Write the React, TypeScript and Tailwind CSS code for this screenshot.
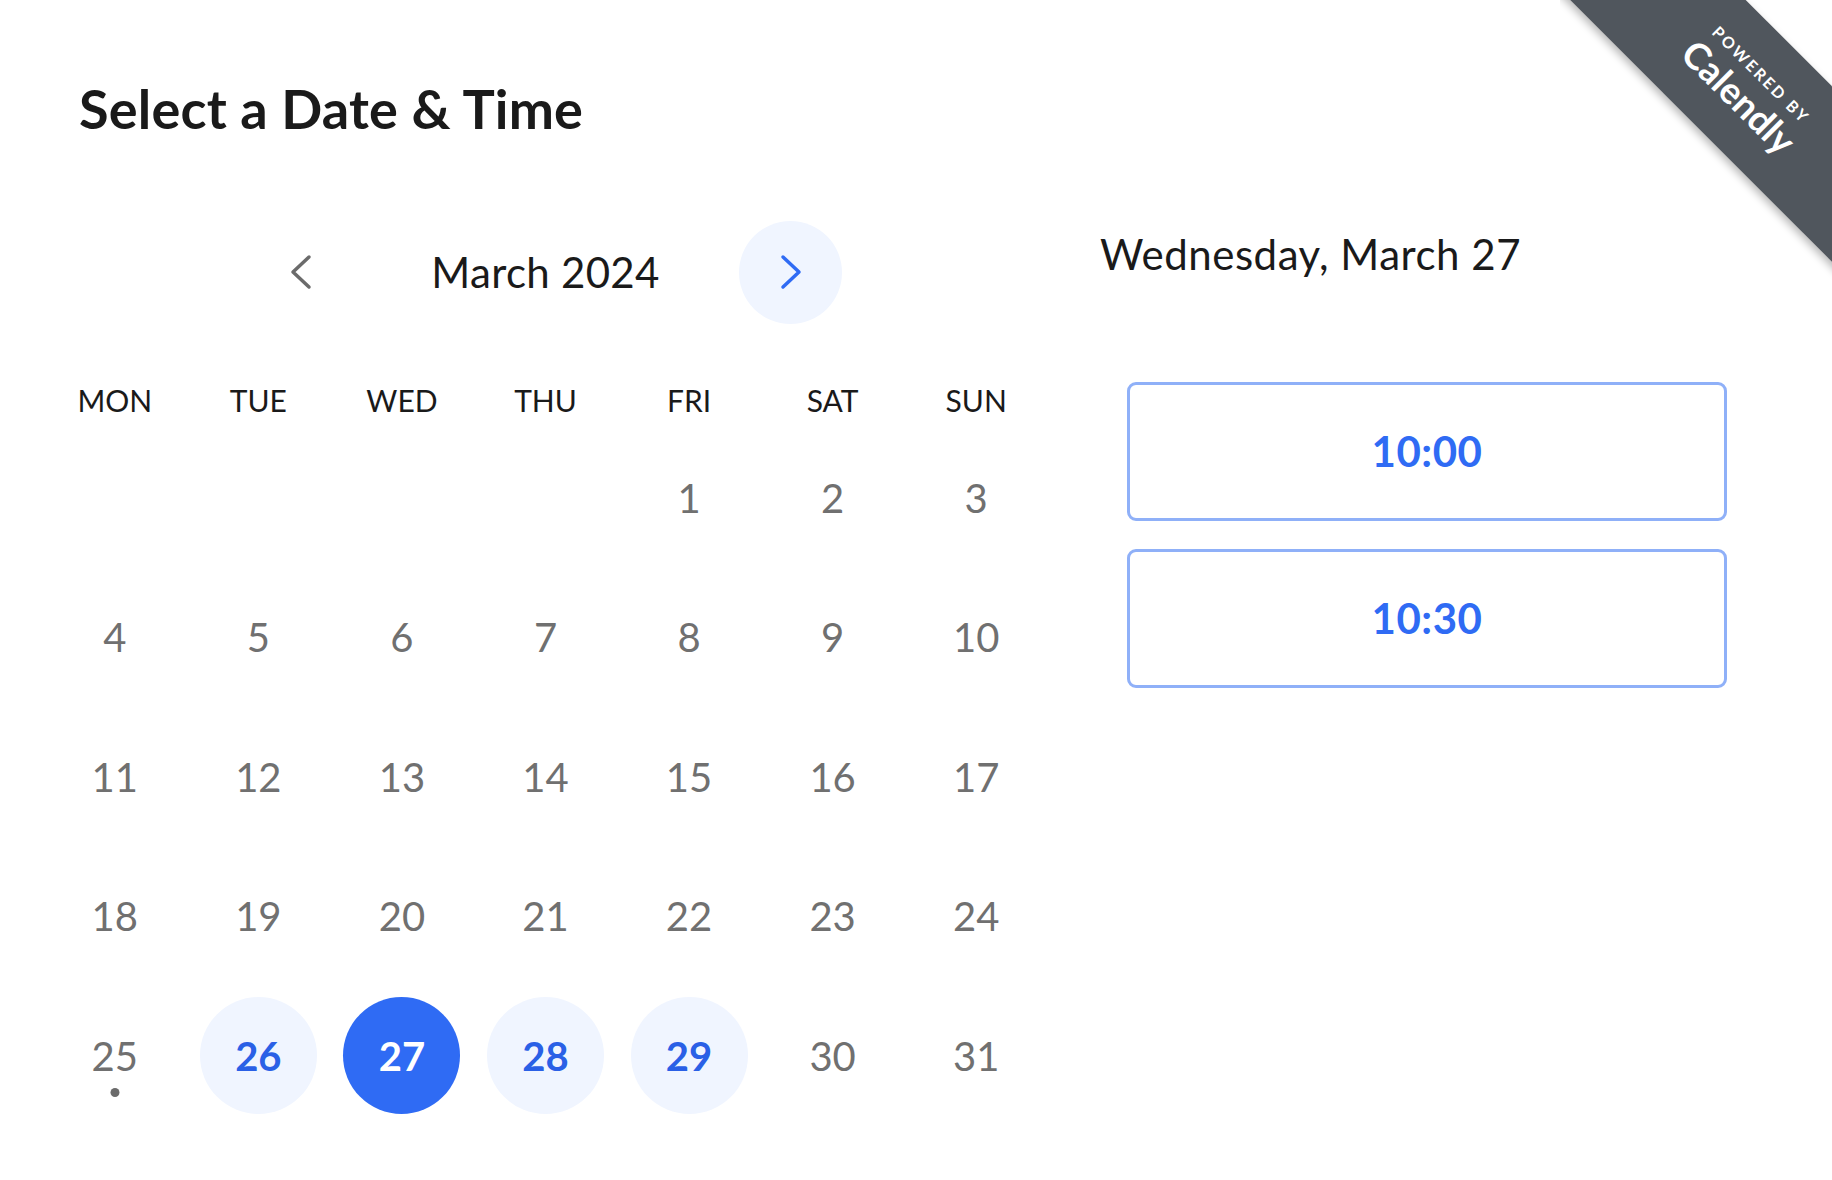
import { useState } from "react";

const DAYS = ["MON", "TUE", "WED", "THU", "FRI", "SAT", "SUN"];

const WEEKS: (number | null)[][] = [
  [null, null, null, null, 1, 2, 3],
  [4, 5, 6, 7, 8, 9, 10],
  [11, 12, 13, 14, 15, 16, 17],
  [18, 19, 20, 21, 22, 23, 24],
  [25, 26, 27, 28, 29, 30, 31],
];

const AVAILABLE = [26, 27, 28, 29];
const TODAY = 25;
const TIMES = ["10:00", "10:30"];

function Chevron({ dir }: { dir: "left" | "right" }) {
  return (
    <svg width="40" height="40" viewBox="0 0 40 40" fill="none">
      <polyline
        points={dir === "left" ? "28,5 12,20 28,35" : "12,5 28,20 12,35"}
        stroke="currentColor"
        strokeWidth="3.5"
        strokeLinecap="round"
        strokeLinejoin="round"
      />
    </svg>
  );
}

function PoweredBy() {
  return (
    <div className="pointer-events-none absolute right-0 top-0 h-[280px] w-[272px] overflow-hidden">
      <div className="absolute left-[-113px] top-[27px] flex h-[124px] w-[600px] rotate-45 flex-col items-center justify-center bg-[#50565d] text-white shadow-[0_4px_8px_rgba(0,0,0,0.28)]">
        <span className="text-[16px] font-bold uppercase leading-none tracking-[2.5px]">Powered by</span>
        <span className="mt-[4px] text-[37px] font-bold leading-none">Calendly</span>
      </div>
    </div>
  );
}

export default function App() {
  const [selected, setSelected] = useState(27);

  return (
    <div className="relative h-[1180px] w-full overflow-hidden bg-white font-['Lato',sans-serif] text-[#1a1a1a]">
      <PoweredBy />

      <div className="pl-[43px] pt-[77px]">
        <h1 className="pl-[36px] text-[54px] font-bold leading-[1.2] tracking-[0.2px]">Select a Date &amp; Time</h1>

        <div className="mt-[79px] flex items-start gap-[52px]">
          {/* calendar */}
          <div className="w-[1005px]">
            <div className="flex items-center justify-center">
              <button type="button" className="flex h-[103px] w-[103px] items-center justify-center rounded-full text-[#6b6b6b]">
                <Chevron dir="left" />
              </button>
              <div className="w-[387px] text-center text-[42px] leading-[1.2] tracking-[0.3px]">March 2024</div>
              <button type="button" className="flex h-[103px] w-[103px] items-center justify-center rounded-full bg-[#f0f5ff] text-[#2f6bf4]">
                <Chevron dir="right" />
              </button>
            </div>

            <div className="mt-[58px] grid grid-cols-7">
              {DAYS.map((d) => (
                <div key={d} className="text-center text-[30px] leading-[36px]">
                  {d}
                </div>
              ))}
            </div>

            <div className="mt-[10px]">
              {WEEKS.map((week, i) => (
                <div key={i} className="grid h-[139.5px] grid-cols-7">
                  {week.map((n, j) => {
                    if (n === null) return <div key={j} />;
                    const isSel = n === selected;
                    const isAvail = AVAILABLE.includes(n);
                    return (
                      <div key={j} className="relative flex items-center justify-center">
                        <button
                          type="button"
                          onClick={() => isAvail && setSelected(n)}
                          className={
                            isSel
                              ? "flex h-[117px] w-[117px] items-center justify-center rounded-full bg-[#2f6bf4] text-[40px] font-bold leading-none text-white"
                              : isAvail
                                ? "flex h-[117px] w-[117px] items-center justify-center rounded-full bg-[#f0f5ff] text-[40px] font-bold leading-none text-[#2a60e6]"
                                : "flex h-[117px] w-[117px] items-center justify-center text-[40px] leading-none text-[#707070]"
                          }
                        >
                          {n}
                        </button>
                        {n === TODAY && (
                          <span className="absolute left-1/2 top-[102px] h-[9px] w-[9px] -translate-x-1/2 rounded-full bg-[#6b6b6b]" />
                        )}
                      </div>
                    );
                  })}
                </div>
              ))}
            </div>
          </div>

          {/* times */}
          <div className="pt-[8px]">
            <p className="text-[42px] leading-[1.2] tracking-[0.5px]">Wednesday, March {selected}</p>
            <div className="ml-[27px] mt-[103px] flex w-[600px] flex-col gap-[28px]">
              {TIMES.map((t) => (
                <button
                  key={t}
                  type="button"
                  className="flex h-[139px] items-center justify-center rounded-[9px] border-[3px] border-[#8fb0f8] text-[42px] font-bold tracking-[0.5px] text-[#2f6bf4]"
                >
                  {t}
                </button>
              ))}
            </div>
          </div>
        </div>
      </div>
    </div>
  );
}
